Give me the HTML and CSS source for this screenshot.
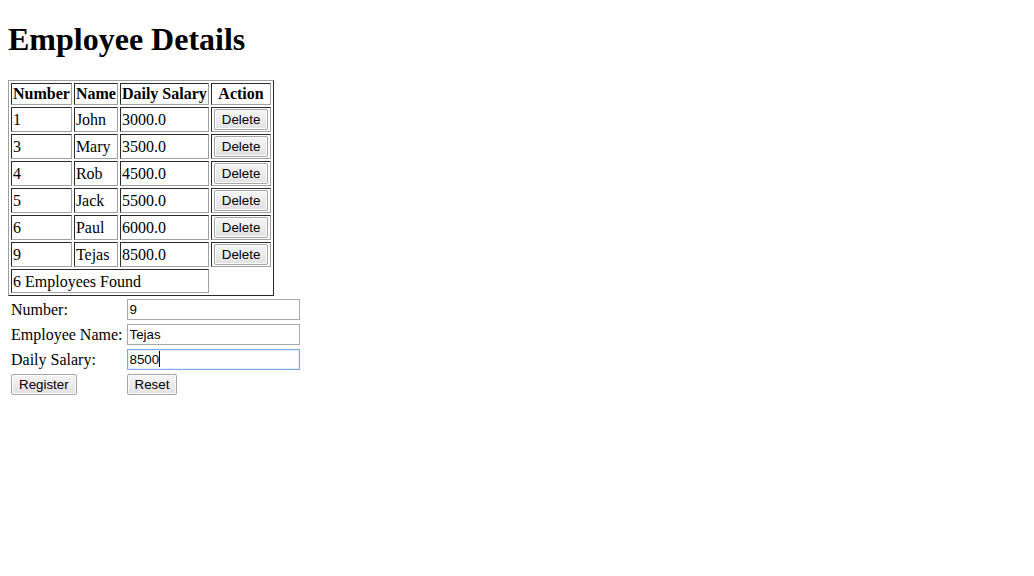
FILE: index.html
```html
<!DOCTYPE html>
<html>
<head>
<meta charset="utf-8">
<title>Employee Details</title>
<link rel="stylesheet" href="styles.css">
</head>
<body>
<h1 class="title">Employee Details</h1>
<table class="grid">
  <tr><th>Number</th><th>Name</th><th>Daily Salary</th><th>Action</th></tr>
  <tr><td>1</td><td>John</td><td>3000.0</td><td><button class="btn">Delete</button></td></tr>
  <tr><td>3</td><td>Mary</td><td>3500.0</td><td><button class="btn">Delete</button></td></tr>
  <tr><td>4</td><td>Rob</td><td>4500.0</td><td><button class="btn">Delete</button></td></tr>
  <tr><td>5</td><td>Jack</td><td>5500.0</td><td><button class="btn">Delete</button></td></tr>
  <tr><td>6</td><td>Paul</td><td>6000.0</td><td><button class="btn">Delete</button></td></tr>
  <tr><td>9</td><td>Tejas</td><td>8500.0</td><td><button class="btn">Delete</button></td></tr>
  <tr><td class="total" colspan="3">6 Employees Found</td></tr>
</table>
<table class="form">
  <tr><td>Number:</td><td><input class="field" type="text" value="9"></td></tr>
  <tr><td>Employee Name:</td><td><input class="field" type="text" value="Tejas"></td></tr>
  <tr><td>Daily Salary:</td><td><span class="field focused">8500<span class="caret"></span></span></td></tr>
  <tr><td><button class="btn">Register</button></td><td><button class="btn">Reset</button></td></tr>
</table>
</body>
</html>
```
FILE: styles.css
```css
html {
  margin: 0;
  padding: 0;
}
body {
  margin: 0;
  padding: 0 8px 8px;
  font-family: "Liberation Serif", "Times New Roman", serif;
  font-size: 16px;
  color: #000;
  background: #fff;
}
.title {
  font-size: 32px;
  font-weight: bold;
  margin: 21px 0 22px;
}
.grid {
  border: 1px solid;
  border-color: #a0a0a0 #2a2a2a #2a2a2a #a0a0a0;
  border-spacing: 2px;
}
.grid th, .grid td {
  border: 1px solid;
  border-color: #2a2a2a #a0a0a0 #a0a0a0 #2a2a2a;
  padding: 1px;
  text-align: left;
}
.grid th {
  text-align: center;
}
.grid td.total {
  padding: 3px 1px 1px;
}
.form {
  border-spacing: 2px;
}
.form td {
  padding: 1px;
}
.btn {
  font-family: "Liberation Sans", Arial, sans-serif;
  font-size: 13.333px;
  color: #000;
  padding: 1px 7px;
  border: 1px solid #a6a6a6;
  border-radius: 2px;
  background: linear-gradient(#f5f5f5, #e1e1e1);
  margin: 0;
  height: 21px;
  box-shadow: inset 0 0 0 1px #fcfcfc;
}
.grid .btn {
  margin: 0 1px;
}
.field {
  display: inline-block;
  vertical-align: middle;
  font-family: "Liberation Sans", Arial, sans-serif;
  font-size: 13.333px;
  line-height: 17px;
  width: 173px;
  height: 21px;
  box-sizing: border-box;
  padding: 1px 2px;
  border: 1px solid #a9a9a9;
  margin: 0;
  outline: none;
  color: #000;
  background: #fff;
}
.field.focused {
  border-color: #7ea6e8;
  box-shadow: inset 0 0 0 1px #e6eefb;
}
.caret {
  display: inline-block;
  width: 1px;
  height: 16px;
  background: #000;
  vertical-align: -3px;
}
```
